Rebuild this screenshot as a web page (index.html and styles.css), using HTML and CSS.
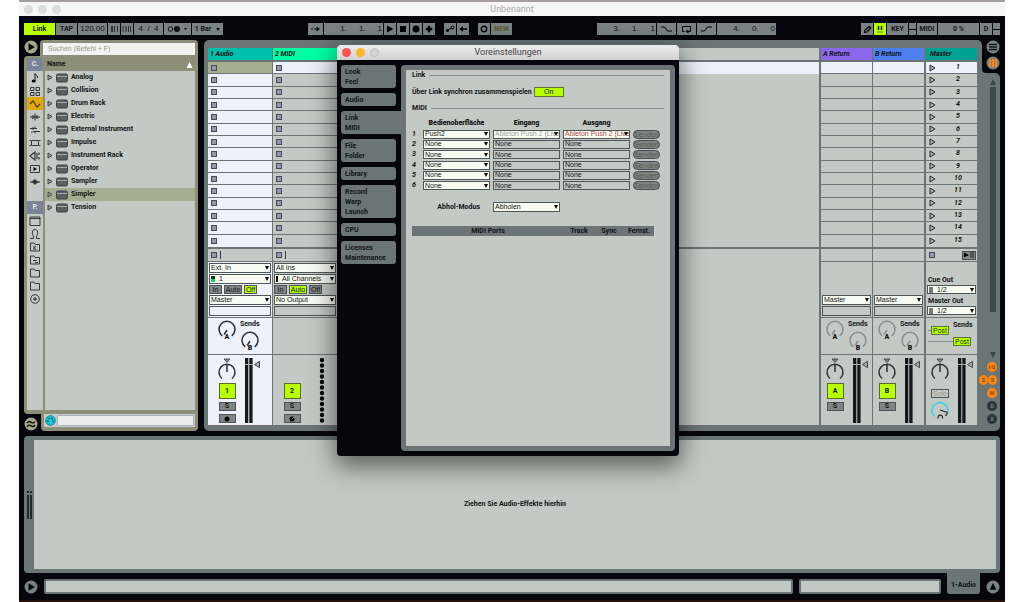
FILE: index.html
```html
<!DOCTYPE html>
<html lang="de">
<head>
<meta charset="utf-8">
<title>Unbenannt</title>
<link rel="stylesheet" href="styles.css">
</head>
<body>
<svg class="defs" aria-hidden="true">
  <symbol id="i-play-circle" viewBox="0 0 14 14"><circle cx="7" cy="7" r="6.5" fill="currentColor"/><path d="M4.500 3.200 L11 7 L4.500 10.800Z" fill="#08060d"/></symbol>
  <symbol id="i-up-circle" viewBox="0 0 14 14"><circle cx="7" cy="7" r="6.5" fill="currentColor"/><path d="M7 2.800 L10.300 9.800 H3.700Z" fill="#08060d"/></symbol>
  <symbol id="i-wave-circle" viewBox="0 0 14 14"><circle cx="7" cy="7" r="6.5" fill="currentColor"/><path d="M3 6 Q5 3.500 7 5.200 T11 4.600 M3 9.600 Q5 7.100 7 8.800 T11 8.200" fill="none" stroke="#08060d" stroke-width="1.3"/></symbol>
  <symbol id="i-folder" viewBox="0 0 12 12"><path d="M1.500 10 V2 H5 L6 3.500 H10.500 V10Z" fill="none" stroke="#333a3c"/></symbol>
  <symbol id="i-device" viewBox="0 0 12 10"><rect x=".5" y="1" width="11" height="8" rx="1.5" fill="#5a6161" stroke="#3d4344"/><path d="M1 3.500H11" stroke="#a4abaa"/></symbol>
  <symbol id="i-send" viewBox="0 0 20 21"><path d="M5.300 15.800 A8 8 0 1 1 14.700 15.800 M10 10 L7.200 14.500" fill="none" stroke="currentColor" stroke-width="1.5"/></symbol>
  <symbol id="i-pan" viewBox="0 0 20 22"><path d="M7 1 H13 L10 4.500Z" fill="#858b8c" stroke="#33383a" stroke-width=".8"/><path d="M5 20.500 A8 8 0 1 1 15 20.500 M10 6 V14" fill="none" stroke="#2b3033" stroke-width="1.500"/></symbol>
  <symbol id="i-meter" viewBox="0 0 18 66"><path d="M0 0H3.300V65H0ZM4.300 0H7.600V65H4.300Z" fill="#15171a"/><path d="M0 6.500H8" stroke="#aab0b0"/><path d="M9.500 6.500 L14.500 3.300V9.700Z" fill="#a5abab" stroke="#42484a"/></symbol>
</svg>
<div class="app">
  <header class="titlebar">
    <div class="lights"><i></i><i></i><i></i></div>
    <h1>Unbenannt</h1>
  </header>

  <nav class="toolbar">
    <div class="group">
      <button class="tb on w30">Link</button>
      <button class="tb w21">TAP</button>
      <button class="tb num w29">120.00</button>
      <button class="tb w12" aria-label="Langsamer"><svg width="9" height="8" viewBox="0 0 9 8"><path d="M1.500 1V7M4.500 1V7M7.500 1V7" stroke="#2a2f31"/><path d="M2.500 1V7" stroke="#2a2f31"/></svg></button>
      <button class="tb w12" aria-label="Schneller"><svg width="10" height="8" viewBox="0 0 10 8"><path d="M1 1V7M4 1V7M6.500 1V7M8.500 1V7" stroke="#2a2f31"/></svg></button>
      <button class="tb num w29">4 &nbsp;/ &nbsp;4</button>
      <button class="tb w27" aria-label="Metronom"><svg width="21" height="8" viewBox="0 0 21 8"><circle cx="3.500" cy="4" r="2.300" fill="none" stroke="#111"/><circle cx="10" cy="4" r="3" fill="#111"/><path d="M17 3H20L18.500 5Z" fill="#111"/></svg></button>
      <button class="tb w30">1 Bar <svg class="caret" width="4" height="3" viewBox="0 0 4 3"><path d="M0 0H4L2 3Z" fill="#111"/></svg></button>
    </div>
    <div class="group wide">
      <div class="group">
        <button class="tb w15" aria-label="Folgen"><svg width="9" height="6" viewBox="0 0 9 6"><path d="M0 3H2M3 3H7" stroke="#111"/><path d="M5.500 .5L9 3L5.500 5.500Z" fill="#111"/></svg></button>
        <div class="tb num pos"><span>1.</span><span>1.</span><span>1</span></div>
        <button class="tb w12" aria-label="Play"><svg width="8" height="8"><path d="M1 .5L7.500 4L1 7.500Z"/></svg></button>
        <button class="tb w12" aria-label="Stop"><svg width="8" height="8"><path d="M1 1H7V7H1Z"/></svg></button>
        <button class="tb w12" aria-label="Aufnahme"><svg width="8" height="8"><circle cx="4" cy="4" r="3.400"/></svg></button>
        <button class="tb w12" aria-label="Overdub"><svg width="8" height="8"><path d="M4 .8V7.200M.8 4H7.200" stroke="#000" stroke-width="2.300"/></svg></button>
      </div>
      <div class="group">
        <button class="tb w12" aria-label="Automation"><svg width="10" height="8"><circle cx="2.500" cy="5.500" r="1.500"/><circle cx="7.500" cy="2.500" r="1.500" fill="none" stroke="#000"/><path d="M3 5L6.500 3" stroke="#000"/></svg></button>
        <button class="tb w12" aria-label="Re-Enable"><svg width="8" height="8"><path d="M3 4H8" stroke="#000" stroke-width="1.500"/><path d="M4 1V7L.5 4Z"/></svg></button>
      </div>
      <div class="group">
        <button class="tb w12" aria-label="Session-Aufnahme"><svg width="8" height="8"><circle cx="4" cy="4" r="2.700" fill="none" stroke="#000" stroke-width="1.400"/></svg></button>
        <button class="tb new w21">NEW</button>
      </div>
    </div>
    <div class="group">
      <div class="tb num pos"><span>3.</span><span>1.</span><span>1</span></div>
      <button class="tb w19" aria-label="Punch-In"><svg width="11" height="8"><path d="M0 2H3C5 2 5 6 7 6H11" fill="none" stroke="#000"/></svg></button>
      <button class="tb w19" aria-label="Loop"><svg width="11" height="9"><path d="M3.500 6.500H1.500V1.500H9.500V6.500H7" fill="none" stroke="#000"/><path d="M7.500 4.500V8.500L4.500 6.500Z"/></svg></button>
      <button class="tb w19" aria-label="Punch-Out"><svg width="11" height="8"><path d="M0 6H3C5 6 5 2 7 2H11" fill="none" stroke="#000"/></svg></button>
      <div class="tb num pos"><span>4.</span><span>0.</span><span>0</span></div>
    </div>
    <div class="group">
      <button class="tb w12" aria-label="Zeichnen"><svg width="9" height="9"><path d="M1.500 7.500L2 5L6 1.500L7.800 3L4 7Z" fill="#777f80" stroke="#000" stroke-width="1.200"/></svg></button>
      <button class="tb on w12" aria-label="Tastatur"><svg width="8" height="8"><path d="M2.500 1V5M5.500 1V5" stroke="#222800" stroke-width="1.600"/><path d="M1.500 7H6.500" stroke="#222800" stroke-dasharray="1"/></svg></button>
      <button class="tb w21">KEY</button>
      <div class="split"><i></i><i></i></div>
      <button class="tb w20">MIDI</button>
      <div class="tb cpu">0 %</div>
      <div class="tb w12">D</div>
      <div class="split"><i></i><i></i></div>
    </div>
  </nav>

  <main class="workspace">
    <aside class="browser">
      <div class="b-top">
        <button class="round olive" aria-label="Browser ausblenden"><svg width="14" height="14"><use href="#i-play-circle"/></svg></button>
        <div class="b-search"><input type="search" placeholder="Suchen (Befehl + F)" aria-label="Suchen"></div>
      </div>
      <div class="b-body">
        <div class="b-cats">
          <div class="cat head">C.</div>
          <div class="cat"><svg width="12" height="12"><path d="M6 9V1.500C6.500 3 9 3.500 8.500 6" fill="none" stroke="#111"/><ellipse cx="4.700" cy="9" rx="2" ry="1.600"/></svg></div>
          <div class="cat"><svg width="12" height="12"><path d="M1.500 2.500H5V5.500H1.500ZM7 2.500H10.500V5.500H7ZM1.500 7.500H5V10.500H1.500ZM7 7.500H10.500V10.500H7Z" fill="none" stroke="#333a3c"/></svg></div>
          <div class="cat picked"><svg width="12" height="12"><path d="M1 6L4 3L8 9L11 6" fill="none" stroke="#4a3600" stroke-width="1.200"/></svg></div>
          <div class="cat"><svg width="12" height="12"><path d="M1 6H11M4 4V8M6 2.500V9.500M8 4V8" stroke="#222"/></svg></div>
          <div class="cat"><svg width="12" height="12"><path d="M1 4.500H8M4 7.500H11M4 3V6M6 2.500V4.500M6 7.500V9.500M3 7.500V9" stroke="#333a3c"/></svg></div>
          <div class="cat"><svg width="12" height="12"><path d="M2.500 3.500H9.500V8.500H2.500ZM.5 3.500H2M.5 8.500H2M10 3.500H11.500M10 8.500H11.500" fill="none" stroke="#333a3c"/></svg></div>
          <div class="cat"><svg width="12" height="12"><path d="M1 6L6 2V10Z M8 3V9 M10 2.500V5 M10 7V9.500" fill="none" stroke="#333a3c" stroke-width="1.200"/></svg></div>
          <div class="cat"><svg width="12" height="12"><path d="M1.500 2.500H10.500V9.500H1.500Z" fill="none" stroke="#333a3c"/><path d="M4.500 4V8L8 6Z"/></svg></div>
          <div class="cat"><svg width="12" height="12"><path d="M1 6H11" stroke="#222"/><path d="M2.500 6L4.500 4L6 3L7.500 4.500L9.500 6L7.500 7.500L6 9L4.500 7.500Z" fill="#333"/></svg></div>
          <div class="cat"></div>
          <div class="cat head">P.</div>
          <div class="cat"><svg width="12" height="12"><path d="M1 2H11V10.500H1Z M1 3.500H11" fill="none" stroke="#333a3c"/></svg></div>
          <div class="cat"><svg width="12" height="12"><path d="M1 10.500H4.500V8C2.500 6 3 1.500 6 1.500S9.500 6 7.500 8V10.500H11" fill="none" stroke="#333a3c"/></svg></div>
          <div class="cat"><svg width="12" height="12"><use href="#i-folder"/><path d="M5 5V9M7 5L5.500 7L7 9" fill="none" stroke="#333a3c"/></svg></div>
          <div class="cat"><svg width="12" height="12"><use href="#i-folder"/><path d="M4 6.500H8M6 8.500H9" stroke="#333a3c"/></svg></div>
          <div class="cat"><svg width="12" height="12"><use href="#i-folder"/></svg></div>
          <div class="cat"><svg width="12" height="12"><use href="#i-folder"/></svg></div>
          <div class="cat"><svg width="12" height="12"><circle cx="6" cy="6" r="4.300" fill="none" stroke="#333a3c"/><path d="M4 6H8M6 4V8" stroke="#222"/></svg></div>
        </div>
        <div class="b-list">
          <div class="b-name">Name<svg width="7" height="6"><path d="M3.500 0L6.500 6H.5Z" fill="#fff"/></svg></div>
          <ul id="devices"></ul>
        </div>
      </div>
      <div class="b-foot">
        <button class="round olive" aria-label="Groove Pool"><svg width="14" height="14"><use href="#i-wave-circle"/></svg></button>
        <div class="b-preview">
          <div class="b-bar">
            <svg width="11" height="11"><circle cx="5.500" cy="5.500" r="4.800" fill="#22c8d6" stroke="#0b7f8c"/><path d="M3 7V5.500A2.500 2.500 0 0 1 8 5.500V7" fill="none" stroke="#075c66" stroke-width="1.200" stroke-dasharray="2 1"/></svg>
            <div class="b-wave"></div>
          </div>
        </div>
      </div>
    </aside>

    <section class="session">
      <div class="tracks">
        <article class="track lit" data-kind="audio">
          <h2 class="teal">1 Audio</h2>
          <div class="slots"></div>
          <div class="stop"><i class="sq"></i><i class="bar"></i></div>
          <div class="io">
            <label class="sel"><select aria-label="Eingang"><option>Ext. In</option></select></label>
            <label class="sel pad"><i class="led"></i><select aria-label="Eingangskanal"><option>1</option></select></label>
            <div class="mon"><button>In</button><button>Auto</button><button class="on">Off</button></div>
            <label class="sel"><select aria-label="Ausgang"><option>Master</option></select></label>
            <div class="box"></div>
          </div>
          <div class="sends">
            <div class="send"><svg width="20" height="21"><use href="#i-send"/></svg><b>A</b></div>
            <div><span>Sends</span><div class="send"><svg width="20" height="21"><use href="#i-send"/></svg><b>B</b></div></div>
          </div>
          <div class="mixer">
            <div class="strip">
              <svg width="20" height="22"><use href="#i-pan"/></svg>
              <button class="act">1</button><button class="sm">S</button>
              <button class="sm" aria-label="Scharfschalten"><svg width="6" height="6"><circle cx="3" cy="3" r="2.500"/></svg></button>
            </div>
            <svg width="18" height="66"><use href="#i-meter"/></svg>
          </div>
        </article>

        <article class="track" data-kind="midi">
          <h2 class="mint">2 MIDI</h2>
          <div class="slots"></div>
          <div class="stop"><i class="sq"></i><i class="bar"></i></div>
          <div class="io">
            <label class="sel"><select aria-label="Eingang"><option>All Ins</option></select></label>
            <label class="sel pad"><i class="led dark"></i><select aria-label="Eingangskanal"><option>All Channels</option></select></label>
            <div class="mon"><button>In</button><button class="on">Auto</button><button>Off</button></div>
            <label class="sel"><select aria-label="Ausgang"><option>No Output</option></select></label>
            <div class="box"></div>
          </div>
          <div class="sends"></div>
          <div class="mixer">
            <div class="strip">
              <div class="nopan"></div>
              <button class="act">2</button><button class="sm">S</button>
              <button class="sm" aria-label="Scharfschalten"><svg width="6" height="6"><circle cx="3" cy="3" r="2.500"/><path d="M3 3L5 1" stroke="#888"/></svg></button>
            </div>
            <svg class="dots" width="6" height="66"><path d="M3 2V64" stroke="#08090b" stroke-width="4.400" stroke-linecap="round" stroke-dasharray="0 5.500"/></svg>
          </div>
        </article>

        <div class="track drop">
          <h2></h2><div class="slots"></div><div class="rest"></div>
        </div>

        <article class="track ret" data-kind="return">
          <h2 class="violet">A Return</h2>
          <div class="slots"></div>
          <div class="stop"></div>
          <div class="io"><i></i><i></i><i></i>
            <label class="sel"><select aria-label="Ausgang"><option>Master</option></select></label>
            <div class="box"></div>
          </div>
          <div class="sends dim">
            <div class="send"><svg width="20" height="21"><use href="#i-send"/></svg><b>A</b></div>
            <div><span>Sends</span><div class="send"><svg width="20" height="21"><use href="#i-send"/></svg><b>B</b></div></div>
          </div>
          <div class="mixer">
            <div class="strip"><svg width="20" height="22"><use href="#i-pan"/></svg><button class="act">A</button><button class="sm">S</button></div>
            <svg width="18" height="66"><use href="#i-meter"/></svg>
          </div>
        </article>

        <article class="track ret near" data-kind="return">
          <h2 class="blue">B Return</h2>
          <div class="slots"></div>
          <div class="stop"></div>
          <div class="io"><i></i><i></i><i></i>
            <label class="sel"><select aria-label="Ausgang"><option>Master</option></select></label>
            <div class="box"></div>
          </div>
          <div class="sends dim">
            <div class="send"><svg width="20" height="21"><use href="#i-send"/></svg><b>A</b></div>
            <div><span>Sends</span><div class="send"><svg width="20" height="21"><use href="#i-send"/></svg><b>B</b></div></div>
          </div>
          <div class="mixer">
            <div class="strip"><svg width="20" height="22"><use href="#i-pan"/></svg><button class="act">B</button><button class="sm">S</button></div>
            <svg width="18" height="66"><use href="#i-meter"/></svg>
          </div>
        </article>

        <article class="track ret" data-kind="master">
          <h2 class="green">Master</h2>
          <div class="slots"></div>
          <div class="stop"><i class="sq"></i><button class="back" aria-label="Zurück zum Arrangement"><svg width="10" height="6"><path d="M0 .5L5 3L0 5.500Z"/><path d="M6 1H10M6 3H10M6 5H10" stroke="#000" stroke-width=".8"/></svg></button></div>
          <div class="io outs">
            <label for="cue">Cue Out</label>
            <div class="sel pad"><i class="led gray"></i><select id="cue"><option>1/2</option></select></div>
            <label for="mout">Master Out</label>
            <div class="sel pad"><i class="led gray"></i><select id="mout"><option>1/2</option></select></div>
          </div>
          <div class="sends posts">
            <button class="post">Post</button>
            <div><span>Sends</span><button class="post">Post</button></div>
          </div>
          <div class="mixer">
            <div class="strip">
              <svg width="20" height="22"><use href="#i-pan"/></svg>
              <button class="solo">Solo</button>
              <svg width="20" height="20"><path d="M4.500 15.500A8 8 0 1 1 17.500 12" fill="none" stroke="#2fd5e4" stroke-width="1.500"/><path d="M10 9L17.500 11.500M17.500 12L15.500 15" fill="none" stroke="#222" stroke-width="1.300"/><path d="M8 17.500V16A2.300 2.300 0 0 1 12.500 16V17.500" fill="none" stroke="#222" stroke-width="1.200"/></svg>
            </div>
            <svg width="18" height="66"><use href="#i-meter"/></svg>
          </div>
        </article>
      </div>

      <div class="side">
        <div class="notch">
          <button class="round" aria-label="Arrangement"><svg width="14" height="14"><circle cx="7" cy="7" r="6.500" fill="#788282"/><path d="M3 4.500H11M3 7H11M3 9.500H11" stroke="#15171a" stroke-width="1.400"/></svg></button>
          <button class="round" aria-label="Session"><svg width="14" height="14"><circle cx="7" cy="7" r="6.500" fill="#788282"/><path d="M4 3V11M7 3V11M10 3V11" stroke="#ff8412" stroke-width="2"/></svg></button>
        </div>
        <div class="rail">
          <svg width="8" height="6"><path d="M4 0L7 6H1Z" fill="#3c4547"/></svg>
          <div class="scroll"></div>
          <svg width="8" height="6"><path d="M4 6L7 0H1Z" fill="#3c4547"/></svg>
          <div class="toggles">
            <button>I·O</button>
            <div><button>S</button><button>R</button></div>
            <button>M</button>
            <button class="dark">D</button>
            <button class="dark">X</button>
          </div>
        </div>
      </div>
    </section>
  </main>

  <section class="device">
    <svg class="dmeter" width="5" height="28"><path d="M0 0H2V2H0ZM3 0H5V2H3ZM0 4H2V28H0ZM3 4H5V28H3Z" fill="#23282a"/></svg>
    <p>Ziehen Sie Audio-Effekte hierhin</p>
  </section>

  <footer class="status">
    <button class="round" aria-label="Hilfe"><svg width="14" height="14"><use href="#i-play-circle"/></svg></button>
    <div class="field"></div>
    <div class="field small"></div>
    <button class="dtab">1-Audio</button>
    <button class="round" aria-label="Detailansicht"><svg width="14" height="14"><use href="#i-up-circle"/></svg></button>
  </footer>

  <div class="dialog" role="dialog" aria-labelledby="dlg-title">
    <header>
      <div class="lights"><i class="red"></i><i class="amber"></i><i></i></div>
      <h2 id="dlg-title">Voreinstellungen</h2>
    </header>
    <div class="d-body">
      <nav class="tabs">
        <button>Look<br>Feel</button>
        <button>Audio</button>
        <button class="cur">Link<br>MIDI</button>
        <button>File<br>Folder</button>
        <button>Library</button>
        <button>Record<br>Warp<br>Launch</button>
        <button>CPU</button>
        <button>Licenses<br>Maintenance</button>
      </nav>
      <div class="pane">
        <h3>Link</h3>
        <div class="linkrow"><label for="linkbtn">Über Link synchron zusammenspielen</label><button id="linkbtn">On</button></div>
        <h3>MIDI</h3>
        <div class="mgrid mhead"><span></span><b>Bedienoberfläche</b><b>Eingang</b><b>Ausgang</b><span></span></div>
        <div class="mrows" id="surfaces"></div>
        <div class="mgrid takeover"><span></span><label for="takeover">Abhol-Modus</label><div class="sel"><select id="takeover"><option>Abholen</option></select></div></div>
        <table><thead><tr><th>MIDI Ports</th><th class="c">Track</th><th class="c">Sync</th><th class="c">Fernst.</th></tr></thead></table>
      </div>
    </div>
  </div>
</div>
<script src="app.js"></script>
</body>
</html>
```

FILE: app.js
```js
const devices = ['Analog', 'Collision', 'Drum Rack', 'Electric', 'External Instrument', 'Impulse',
  'Instrument Rack', 'Operator', 'Sampler', 'Simpler', 'Tension'];
document.getElementById('devices').innerHTML = devices.map(name =>
  `<li class="${name === 'Simpler' ? 'cur' : ''}"><svg width="6" height="7"><path d="M1 1L5 3.500L1 6Z" fill="#9aa09f" stroke="#333a3c" stroke-width=".9"/></svg>` +
  `<svg width="12" height="10"><use href="#i-device"/></svg>${name}</li>`).join('');

document.querySelectorAll('.track').forEach(track => {
  const kind = track.dataset.kind;
  let html = '';
  for (let n = 1; n <= 15; n++) {
    let inner = '';
    if (kind === 'audio' || kind === 'midi') inner = '<i class="sq"></i>';
    if (kind === 'master') {
      inner = `<svg width="7" height="8"><path d="M1 1L6 4L1 7Z" fill="#a9b0bb" stroke="#23282a"/></svg><span>${n}</span>`;
    }
    html += `<div>${inner}</div>`;
  }
  track.querySelector('.slots').innerHTML = html;
});

let rows = '';
for (let n = 1; n <= 6; n++) {
  const first = n === 1;
  const port = first ? 'Ableton Push 2 (Live Port)' : 'None';
  rows += `<div class="mgrid"><em>${n}</em>
    <div class="sel"><select aria-label="Bedienoberfläche ${n}"><option>${first ? 'Push2' : 'None'}</option></select></div>
    <div class="sel ${first ? 'faint' : 'off'}"><select aria-label="Eingang ${n}"><option>${port}</option></select></div>
    <div class="sel ${first ? 'warn' : 'off'}"><select aria-label="Ausgang ${n}"><option>${port}</option></select></div>
    <button class="sender">Senden</button></div>`;
}
document.getElementById('surfaces').innerHTML = rows;
```

FILE: styles.css
```css
:root {
  --black: #08060d;
  --frame: #6b7575;
  --panel: #c3c9c4;
  --lit: #eef0fa;
  --olive: #8c8e78;
  --lime: #b8ff00;
  --line: #6b7575;
  --btn: #7a8283;
}
* { box-sizing: border-box; }
body { margin: 0; background: #fff; font: bold 7px/9px Roboto, "Liberation Sans", sans-serif; color: #111416; }
h1, h2, h3, p, ul { margin: 0; padding: 0; font: inherit; list-style: none; }
button, input, select { font: inherit; color: inherit; margin: 0; padding: 0; border: 0; border-radius: 0; background: none; }
svg { display: block; flex: none; }
i { display: block; }
.defs { position: absolute; width: 0; height: 0; }

.app { position: relative; margin: 0 19px; min-height: 100vh; display: flex; flex-direction: column;
  background: var(--black); border-top: 2px solid #a59e9e; border-bottom: 2px solid #241008; }
.titlebar { height: 14px; background: #f6f6f6; display: grid; grid-template-columns: 1fr auto 1fr; align-items: center; padding: 0 5px; }
.titlebar h1 { font-size: 9px; font-weight: 400; color: #aaa; }
.lights { display: flex; gap: 5px; }
.lights i { width: 9px; height: 9px; border-radius: 50%; background: #dcdcdc; }
.lights .red { background: #fc5650; }
.lights .amber { background: #fdb827; }

.toolbar { display: flex; justify-content: space-between; padding: 7px 5px 5px; }
.group { display: flex; gap: 1px; }
.group.wide { gap: 9px; }
.tb { height: 12px; background: var(--btn); display: flex; align-items: center; justify-content: center; gap: 5px; white-space: nowrap; }
.tb.on { background: var(--lime); }
.tb.num { font: 8px/12px "Liberation Sans", sans-serif; }
.tb.new { color: #5c5a2c; }
.pos { width: 59px; gap: 12px; justify-content: flex-end; padding-right: 1px; }
.w12 { width: 12px; } .w15 { width: 15px; } .w19 { width: 19px; } .w20 { width: 20px; }
.w21 { width: 21px; } .w27 { width: 27px; } .w29 { width: 29px; } .w30 { width: 31px; }
.cpu { width: 41px; }
.split { width: 7px; display: grid; gap: 1px; }
.split i { background: var(--btn); }

.workspace { display: grid; grid-template-columns: 174px 1fr; gap: 6px; padding: 0 5px; }
.round { width: 14px; height: 14px; color: #788282; }
.round.olive { color: #a4a68e; }

.browser { display: flex; flex-direction: column; }
.b-top { display: flex; gap: 2px; }
.b-search { flex: 1; background: var(--olive); padding: 3px 3px 1px; border-radius: 4px 4px 0 0; }
.b-search input { display: block; width: 100%; height: 12px; background: #f2f2f0; padding: 0 5px; font: 7px/12px "Liberation Sans", sans-serif; }
.b-search input::placeholder { color: #999984; opacity: 1; }
.b-body { flex: 1; background: var(--olive); border-radius: 4px 0 0 4px; padding: 2px 3px 4px; display: grid; grid-template-columns: 16px 1fr; gap: 2px; }
.b-cats { background: var(--panel); }
.cat { height: 13px; display: grid; place-items: center; }
.cat.head { background: #7b8395; color: #e6e8ee; }
.cat.picked { background: #e0a906; }
.b-list { background: var(--panel); }
.b-name { height: 13px; background: var(--olive); display: flex; justify-content: space-between; align-items: center; padding: 0 2px; }
.b-list li { height: 13px; display: flex; align-items: center; gap: 3px; padding-left: 2px; }
.b-list li.cur { background: #a6ae92; }
.b-foot { display: flex; gap: 3px; }
.b-foot .round { margin-top: 3px; }
.b-preview { flex: 1; padding: 0 3px 4px; background: var(--olive); border-radius: 0 0 4px 4px; }
.b-bar { display: flex; gap: 1px; height: 13px; padding: 0 1px; align-items: center; background: #c9cdcb; }
.b-wave { flex: 1; height: 11px; background: #ececec; border: 1px solid #a9b5bd; }

.session { display: grid; grid-template-columns: 1fr 18px; }
.tracks { background: var(--frame); border-radius: 5px 5px 0 5px; padding: 8px 5px 6px 4px; display: grid;
  grid-template-columns: 64px 64px 1fr 52px 51px 52px; gap: 1px; }
.track { min-width: 0; display: flex; flex-direction: column; gap: 1px; }
.track > * { background: var(--panel); }
.track.lit > * { background: var(--lit); }
.track.ret { margin-left: 1px; }
.track.near { margin-left: 0; }
.track h2 { height: 12px; line-height: 12px; padding-left: 2px; font-style: italic; margin-bottom: 1px; white-space: nowrap; }
.track h2.teal { background: #00c0ae; }
.track h2.mint { background: #00ffa5; }
.track h2.violet { background: #8b67ee; }
.track h2.blue { background: #4f7eee; }
.track h2.green { background: #00a092; padding-left: 4px; }
.slots { height: 185px; display: grid; grid-auto-rows: 1fr; margin-bottom: 1px; }
.slots div { display: flex; align-items: center; padding-left: 3px; border-bottom: 1px solid var(--line); font-style: italic; }
.slots div:first-child { background: var(--lit); }
.slots div:last-child { border-bottom: 0; }
.lit .slots div:first-child { background: #a6ae92; }
.drop .slots div { border: 0; }
.slots span { flex: 1; text-align: center; padding-left: 3px; }
.sq { width: 6px; height: 6px; background: #9299a8; border: 1px solid #454c54; }
.stop { height: 12px; display: flex; align-items: center; gap: 3px; padding-left: 3px; }
.track.lit .stop { background: var(--panel); }
.stop .bar { width: 1px; height: 8px; background: #33383a; }
.back { margin-left: auto; margin-right: 1px; width: 14px; height: 9px; background: #858c8d; border: 1px solid #454c4e; display: grid; place-items: center; }
.drop .rest { flex: 1; }

.io { height: 55px; padding: 1px; display: grid; grid-template-rows: repeat(5, 1fr); gap: 1px; }
.sel { position: relative; display: flex; align-items: center; gap: 3px; min-width: 0; height: 100%; border: 1px solid #4d5556; background: #f8fbf2; font: 7px/8px "Liberation Sans", sans-serif; overflow: hidden; }
.sel.pad { padding-left: 1px; }
.sel select { appearance: none; flex: 1; min-width: 0; width: 100%; line-height: 8px; padding-left: 1px; outline: 0; }
.sel::after { content: ""; position: absolute; right: 1px; top: 50%; margin-top: -2px; border: 2px solid transparent; border-top: 4px solid #08090b; border-bottom: 0; }
.sel.off { background: transparent; }
.sel.off::after { display: none; }
.sel.faint { color: #9da6a6; }
.sel.warn { color: #ad4f45; }
.led { width: 4px; height: 6px; background: linear-gradient(#15301c 50%, #17d45b 50%); flex: none; }
.led.dark { width: 2px; background: #111; }
.led.gray { background: #74797a; }
.mon { display: flex; gap: 2px; font: 7px/8px "Liberation Sans", sans-serif; }
.mon button { background: #7f8485; border: 1px solid #4d5556; width: 13px; line-height: 7px; overflow: hidden; white-space: nowrap; }
.mon button:nth-child(2) { width: 18px; }
.mon .on, .post { background: var(--lime); }
.box { border: 1px solid #4d5556; }
.outs { grid-template-rows: 14px 9px 12px 9px; align-items: end; padding-top: 9px; gap: 0; }
.outs label { padding-left: 1px; white-space: nowrap; }

.sends { height: 36px; display: flex; gap: 3px; padding: 2px 0 0 9px; color: #2b3033; }
.ret .sends { padding-left: 4px; }
.sends span { display: block; line-height: 9px; height: 11px; color: #111416; }
.sends.dim svg { color: #868e8e; }
.send { display: grid; width: 20px; align-self: start; }
.send > * { grid-area: 1 / 1; }
.send b { align-self: end; justify-self: center; line-height: 7px; color: #111416; }
.posts { gap: 4px; padding-top: 3px; background: linear-gradient(#8d9594, #8d9594) 2px 12px / 4px 1px no-repeat, linear-gradient(#8d9594, #8d9594) 2px 23px / 27px 1px no-repeat, var(--panel); }
.posts > .post { margin-top: 5px; margin-left: 1px; }
.posts span { height: 16px; }
.post { display: block; width: 18px; height: 9px; border: 1px solid #59733a; font: 7px/7px "Liberation Sans", sans-serif; }

.mixer { height: 70px; display: flex; gap: 8px; padding: 3px 0 0 9px; }
.ret .mixer { padding-left: 4px; }
.strip { width: 20px; display: flex; flex-direction: column; align-items: center; gap: 3px; }
.nopan { height: 22px; }
.act { width: 17px; height: 16px; background: var(--lime); border: 1px solid #5a6a2c; }
.sm { width: 17px; height: 9px; line-height: 7px; background: #7f8485; border: 1px solid #4d5556; display: grid; place-items: center; flex: none; }
.solo { width: 18px; height: 9px; margin-top: 6px; border: 1px solid #4d5556; color: #99978a; font: 7px/7px "Liberation Sans", sans-serif; }
.dots { margin-left: 9px; }

.side { display: flex; flex-direction: column; background: linear-gradient(90deg, var(--frame) 50%, transparent 50%); border-radius: 0 0 5px 0; }
.tracks { border-top-right-radius: 5px; }
.notch { height: 33px; background: var(--black); border-radius: 0 0 0 4px; display: flex; flex-direction: column; align-items: flex-end; gap: 2px; }
.rail { flex: 1; background: var(--frame); border-radius: 0 5px 5px 0; display: flex; flex-direction: column; align-items: flex-end; padding: 6px 3px 5px 0; }
.scroll { width: 6px; height: 225px; margin: 2px 1px 40px; background: #3f484a; }
.toggles { display: flex; flex-direction: column; align-items: flex-end; gap: 3px; margin-top: 4px; }
.toggles div { display: flex; }
.toggles button { width: 10px; height: 10px; border-radius: 50%; background: #ff8412; color: #7d4a18; font-size: 5px; line-height: 10px; }
.toggles div button { width: 9px; }
.toggles .dark { background: #2c3538; color: #7f8888; }

.device { flex: 1; margin: 5px 5px 0; background: var(--frame); border-radius: 4px; padding: 4px 4px 4px 3px; display: grid; grid-template-columns: 7px 1fr; align-items: center; }
.device p { height: 100%; background: var(--panel); display: grid; place-items: center; }
.status { display: flex; align-items: center; padding: 0 5px; gap: 6px; height: 27px; }
.field { flex: 1; height: 15px; background: var(--panel); border: 2px solid var(--frame); border-radius: 2px; }
.field.small { flex: 0 0 142px; }
.dtab { align-self: flex-start; height: 21px; width: 33px; background: var(--frame); border-radius: 0 0 3px 3px; padding-top: 4px; }

.dialog { position: absolute; left: 318px; top: 43px; width: 342px; height: 411px; display: flex; flex-direction: column; background: var(--black); border-radius: 4px; box-shadow: 0 8px 26px 2px rgba(0, 0, 0, .55); overflow: hidden; }
.dialog header { height: 15px; background: linear-gradient(#ededed, #d0d0d0); display: grid; grid-template-columns: 1fr auto 1fr; align-items: center; padding: 0 5px; }
.dialog header h2 { font-size: 9px; font-weight: 400; color: #444; }
.dialog header .lights i:last-child { border: 1px solid #c0c0c0; background: #d4d4d4; }
.d-body { flex: 1; display: grid; grid-template-columns: 60px 1fr; padding: 5px 4px; }
.tabs { display: flex; flex-direction: column; gap: 5px; padding-right: 5px; }
.tabs button { background: var(--frame); border-radius: 3px; text-align: left; line-height: 10px; padding: 2px 4px 1px; }
.tabs .cur { margin-right: -8px; padding-right: 8px; border-radius: 3px 0 0 3px; }
.pane { background: var(--panel); border: 5px solid var(--frame); border-radius: 4px; padding: 0 6px; }
.pane h3 { display: flex; align-items: center; gap: 4px; line-height: 11px; }
.pane h3::after { content: ""; flex: 1; height: 1px; background: #838c8b; }
.linkrow { display: flex; align-items: center; gap: 2px; height: 20px; margin: 1px 0; white-space: nowrap; }
.linkrow button { width: 30px; height: 10px; background: var(--lime); border: 1px solid #59733a; font: 7px/8px "Liberation Sans", sans-serif; }
.mgrid { display: grid; grid-template-columns: 8px 67px 67px 67px 27px; column-gap: 3px; align-items: center; min-height: 0; }
.mhead { text-align: center; height: 11px; margin-top: 4px; }
.mrows { height: 62px; display: grid; grid-template-rows: repeat(6, 1fr); }
.mrows .sel { height: 9px; }
.sender { height: 9px; background: #7d8586; border: 1px solid #454d4e; border-radius: 5px; color: #5b5e50; font: 7px/7px "Liberation Sans", sans-serif; }
.takeover { height: 10px; margin-top: 11px; }
.takeover label { text-align: right; padding-right: 10px; white-space: nowrap; }
.pane table { width: calc(100% - 10px); margin-top: 14px; border-collapse: collapse; background: var(--frame); table-layout: fixed; }
.pane th { padding: 0; height: 10px; line-height: 10px; font-weight: bold; }
.pane th.c { width: 30px; }
```
